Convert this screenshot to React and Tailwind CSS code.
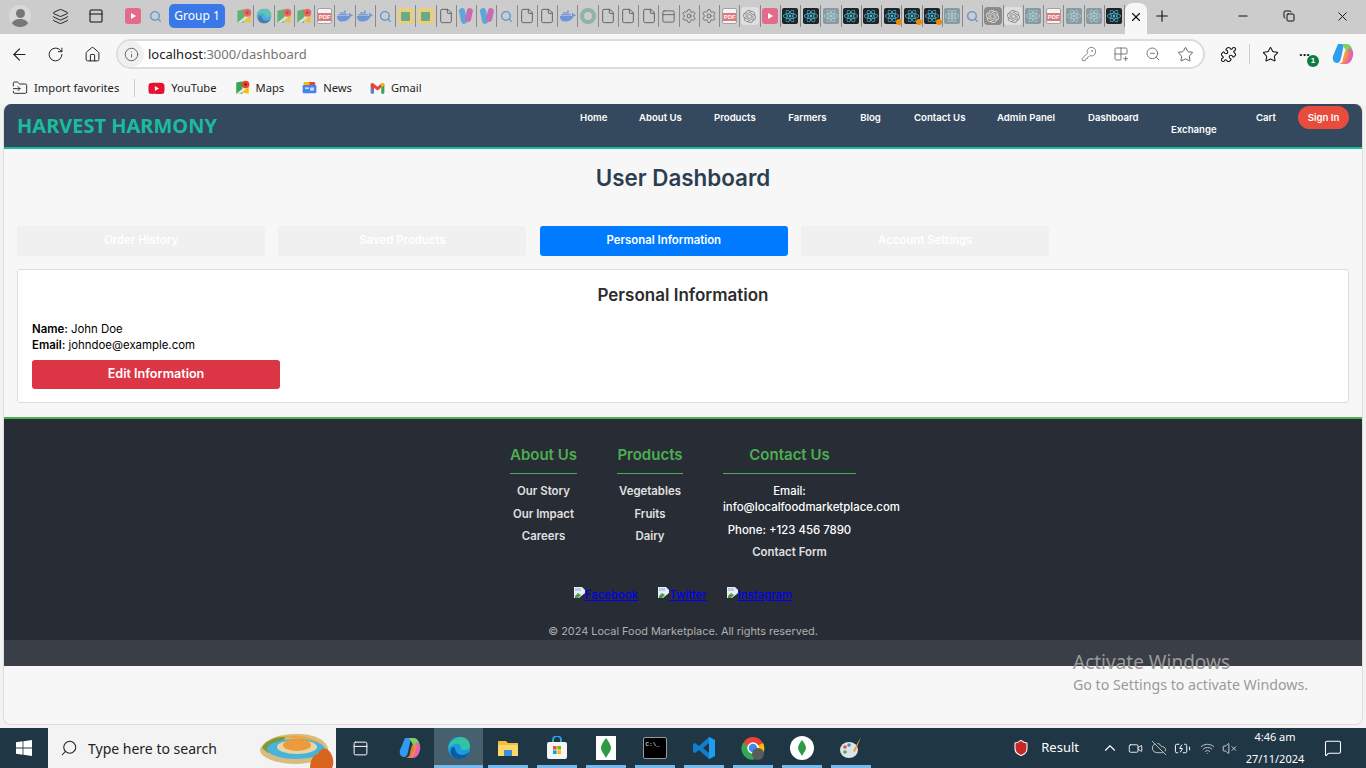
import React from "react";
import { ArrowLeft, RotateCw, House, Info, KeyRound, Grid2x2Plus, ZoomOut, Star, Puzzle, X, Plus, Minus, Copy, ChevronUp, VolumeX, Wifi, CloudOff, MessageSquare, Search, File, Settings, Layers, PanelTop, BatteryCharging, Video, Shield, FolderInput } from "lucide-react";
import { FaDocker, FaReact, FaYoutube } from "react-icons/fa";
import { SiOpenai } from "react-icons/si";

const poppins = "font-['Inter','Noto_Sans',sans-serif]";

const EdgeLogo = ({ size = 16 }) => (
    <svg width={size} height={size} viewBox="0 0 24 24">
        <circle cx="12" cy="12" r="11" fill="#1b9de2" />
        <path d="M1 13C2 5 9 1 14 1c5 0 9 4 9 9 0 3-3 4-6 4-2 0-3-1-3-2 0-3-3-5-6-4-4 1-6 3-7 5z" fill="#35c1a3" />
        <path d="M8 12c0 4 3 7 7 7 2 0 5-1 7-3-2 5-6 7-10 7-6 0-10-5-8-10 1-2 3-3 4-1z" fill="#0c59a4" />
    </svg>
);

const CopilotLogo = ({ size = 24 }) => (
    <svg width={size} height={size} viewBox="0 0 24 24">
        <path d="M7 2h6l-3 14c-.5 3-2 5-4 5-3 0-5-3-4-7z" fill="#2f9cf0" />
        <path d="M11 2h5c3 0 5 3 6 8l-5 3-3-6z" fill="#7fd15f" />
        <path d="M18 6c3 1 5 4 4 8-1 4-3 8-7 8H9c3 0 4-2 5-5z" fill="#e661b5" />
        <path d="M14 9h5l-2 8c-1 3-3 5-6 5H8c3-1 4-3 4-6z" fill="#f38b3c" opacity=".85" />
    </svg>
);

const GmailLogo = () => (
    <svg width="15" height="12" viewBox="0 0 24 18">
        <path d="M1 4v12c0 1 .6 2 2 2h3V8z" fill="#4285f4" />
        <path d="M23 4v12c0 1-.6 2-2 2h-3V8z" fill="#34a853" />
        <path d="M6 8v10h0L1 4c0-3 3-4 5-2l6 5 6-5c2-2 5-1 5 2l-5 4-6 5z" fill="#ea4335" />
        <path d="M18 8V2c2-2 5-1 5 2z" fill="#fbbc04" />
    </svg>
);

const MapsLogo = ({ size = 15 }) => (
    <svg width={size} height={size} viewBox="0 0 24 24">
        <path d="M2 4l10-2v20L2 22z" fill="#34a853" />
        <path d="M12 2l10 2v18l-10-2z" fill="#fbbc04" />
        <path d="M2 22L22 6v5L8 22z" fill="#e8eaed" />
        <circle cx="17" cy="7" r="6" fill="#ea4335" />
        <circle cx="17" cy="7" r="2" fill="#a50e0e" />
    </svg>
);

const NewsLogo = () => (
    <svg width="15" height="15" viewBox="0 0 24 24">
        <rect x="3" y="3" width="18" height="8" rx="2" fill="#ea4335" />
        <rect x="3" y="3" width="9" height="8" rx="2" fill="#fbbc04" />
        <rect x="1" y="8" width="22" height="13" rx="2" fill="#4285f4" />
        <rect x="5" y="12" width="6" height="2" fill="#fff" />
        <rect x="13" y="12" width="6" height="5" fill="#cfe0fc" />
    </svg>
);

const PdfIcon = () => (
    <span className="relative flex h-[16px] w-[15px] items-end justify-center rounded-[2px] border border-[#999] bg-white opacity-80">
        <span className="mb-[2px] w-[15px] bg-[#e2646c] text-center font-['Liberation_Sans',sans-serif] text-[6px] font-bold leading-[8px] text-white">PDF</span>
    </span>
);

const ReactIcon = ({ dim, dot }) => (
    <span className={`relative flex h-[16px] w-[16px] items-center justify-center rounded-[2px] ${dim ? "bg-[#8a9a9e]" : "bg-[#1f2428]"}`}>
        <FaReact size={14} color={dim ? "#a8d4de" : "#4fc3dc"} />
        {dot && <span className="absolute -bottom-[1px] -right-[2px] h-[6px] w-[6px] rounded-full bg-[#f08a00]" />}
    </span>
);

const faded = "opacity-70";

const tabIcons = {
    yt: <span className="flex h-[16px] w-[16px] items-center justify-center rounded-[3px] bg-[#e46b8c]"><span className="ml-[1px] h-0 w-0 border-y-[3px] border-l-[5px] border-y-transparent border-l-white" /></span>,
    search: <Search size={13} color="#5f96cc" strokeWidth={2.5} />,
    maps: <span className={faded}><MapsLogo size={16} /></span>,
    edge: <span className={faded}><EdgeLogo /></span>,
    pdf: <PdfIcon />,
    docker: <FaDocker size={16} color="#6f97d8" />,
    img: <span className="flex h-[16px] w-[16px] items-center justify-center rounded-[2px] bg-[#e5cf80]"><span className="h-[9px] w-[9px] rounded-[1px] bg-[#6fa886]" /></span>,
    file: <File size={16} color="#555" strokeWidth={1.3} />,
    slack: <span className="flex"><span className="h-[16px] w-[6px] -rotate-12 rounded-full bg-[#5fa6d6]" /><span className="h-[14px] w-[6px] rotate-12 rounded-full bg-[#c76bb5]" /></span>,
    ring: <span className="h-[16px] w-[16px] rounded-full border-[4px] border-[#8fb3aa]" />,
    tabs: <PanelTop size={15} color="#555" strokeWidth={1.3} />,
    gear: <Settings size={16} color="#666" strokeWidth={1.3} />,
    openai: <span className="flex h-[18px] w-[18px] items-center justify-center rounded-[4px] bg-[#dfdfdf]"><SiOpenai size={13} color="#888" /></span>,
    openaiDark: <span className="flex h-[18px] w-[18px] items-center justify-center rounded-[4px] bg-[#8b8b8b]"><SiOpenai size={13} color="#ddd" /></span>,
    react: <ReactIcon />,
    reactDim: <ReactIcon dim />,
    reactDot: <ReactIcon dot />,
};

const firstTabs = ["yt", "search"];
const restTabs = [
    "maps", "edge", "maps", "maps", "pdf", "docker", "docker", "search", "img", "img", "file", "slack", "slack", "search", "file", "file", "docker", "ring", "file", "file", "file", "tabs",
    "gear", "gear", "pdf", "openai", "yt", "react", "react", "reactDim", "react", "react", "reactDot", "reactDot", "reactDot", "reactDim", "search", "openaiDark", "openai", "reactDim", "pdf", "reactDim", "reactDim", "react",
];

const TabIcon = ({ kind }) => (
    <div className="flex h-[22px] w-[20.25px] shrink-0 items-center justify-center border-r border-[#8a8a8a]">
        {tabIcons[kind]}
    </div>
);

const TabStrip = () => (
    <div className="flex h-[34px] items-center bg-[#cccccc] pb-[2px]">
        <div className="flex w-[122px] shrink-0 items-center">
            <div className="ml-[9px] flex h-[22px] w-[22px] flex-col items-center justify-end overflow-hidden rounded-full bg-[#d8d8d8]">
                <span className="h-[9px] w-[9px] rounded-full bg-[#777]" />
                <span className="mt-[1px] h-[8px] w-[18px] rounded-t-full bg-[#777]" />
            </div>
            <Layers size={17} color="#222" strokeWidth={1.4} className="ml-[21px]" />
            <PanelTop size={16} color="#111" strokeWidth={1.6} className="ml-[19px]" />
        </div>
        {firstTabs.map((k, i) => <div key={i} className="flex w-[22px] shrink-0 justify-center">{tabIcons[k]}</div>)}
        <div className="ml-[3px] mr-[9px] flex h-[24px] w-[56px] shrink-0 items-center justify-center rounded-[5px] bg-[#3b78e7] font-['Noto_Sans',sans-serif] text-[12px] text-white">Group 1</div>
        {restTabs.map((k, i) => <TabIcon key={i} kind={k} />)}
        <div className="mt-[5px] flex h-[31px] w-[22px] shrink-0 items-center justify-center rounded-t-[8px] bg-[#f7f7f7] pb-[3px]">
            <X size={14} color="#111" />
        </div>
        <Plus size={18} color="#111" strokeWidth={1.5} className="ml-[6px]" />
        <div className="ml-auto flex items-center">
            <Minus size={14} color="#111" className="mr-[33px]" />
            <Copy size={12} color="#111" className="mr-[40px]" />
            <X size={15} color="#111" strokeWidth={1.5} className="mr-[16px]" />
        </div>
    </div>
);

const AddressBar = () => (
    <div className="flex h-[38px] items-center bg-[#f7f7f7] pt-[2px]">
        <ArrowLeft size={19} color="#222" strokeWidth={1.4} className="ml-[10px]" />
        <RotateCw size={17} color="#222" strokeWidth={1.4} className="ml-[18px]" />
        <House size={17} color="#222" strokeWidth={1.4} className="ml-[20px]" />
        <div className="ml-[15px] flex h-[30px] w-[1089px] items-center rounded-full border-2 border-[#dcdcdc] bg-white">
            <span className="flex h-[26px] w-[26px] items-center justify-center rounded-full bg-[#f0f0f0]">
                <Info size={15} color="#555" strokeWidth={1.4} />
            </span>
            <span className="ml-[4px] mt-[1px] font-['Noto_Sans',sans-serif] text-[13px] text-[#1a1a1a]">localhost<span className="text-[#757575]">:3000/dashboard</span></span>
            <div className="ml-auto mr-[9px] flex items-center gap-[16px]">
                <KeyRound size={16} color="#777" strokeWidth={1.3} />
                <Grid2x2Plus size={16} color="#666" strokeWidth={1.3} />
                <ZoomOut size={16} color="#666" strokeWidth={1.3} />
                <Star size={17} color="#555" strokeWidth={1.3} />
            </div>
        </div>
        <Puzzle size={17} color="#111" strokeWidth={1.5} className="ml-[15px]" />
        <span className="ml-[12px] h-[20px] w-px bg-[#ccc]" />
        <Star size={17} color="#111" strokeWidth={1.5} className="ml-[12px]" />
        <div className="relative ml-[20px] text-[13px] font-bold leading-none text-[#111]">
            ···
            <span className="absolute -bottom-[6px] -right-[9px] flex h-[12px] w-[12px] items-center justify-center rounded-full bg-[#107c41] font-['Liberation_Sans',sans-serif] text-[8px] text-white">1</span>
        </div>
        <span className="ml-[21px]"><CopilotLogo size={24} /></span>
    </div>
);

const Bookmark = ({ icon, label, className = "" }) => (
    <div className={`flex items-center gap-[6px] ${className}`}>
        {icon}
        <span>{label}</span>
    </div>
);

const BookmarksBar = () => (
    <div className="flex h-[32px] items-center bg-[#f7f7f7] pl-[12px] font-['Noto_Sans',sans-serif] text-[11.2px] text-[#222]">
        <Bookmark icon={<FolderInput size={16} color="#222" strokeWidth={1.4} />} label="Import favorites" />
        <span className="ml-[15px] h-[18px] w-px bg-[#ccc]" />
        <Bookmark icon={<FaYoutube size={17} color="#e8102e" />} label="YouTube" className="ml-[13px]" />
        <Bookmark icon={<MapsLogo />} label="Maps" className="ml-[18px]" />
        <Bookmark icon={<NewsLogo />} label="News" className="ml-[18px]" />
        <Bookmark icon={<GmailLogo />} label="Gmail" className="ml-[18px]" />
    </div>
);

const navItems = [
    { label: "Home", w: "w-[26px]" },
    { label: "About Us", w: "w-[42px]" },
    { label: "Products", w: "w-[41px]" },
    { label: "Farmers", w: "w-[39px]" },
    { label: "Blog", w: "w-[21px]" },
    { label: "Contact Us", w: "w-[50px]" },
    { label: "Admin Panel", w: "w-[58px]" },
    { label: "Dashboard", w: "w-[50px]" },
];

const Header = () => (
    <header className="flex h-[45px] items-start justify-between border-b-2 border-[#1abc9c] bg-[#34495e] px-[13px] shadow-[0_2px_4px_rgba(0,0,0,0.1)]">
        <div className="mt-[8px] font-['Noto_Sans',sans-serif] text-[20px] font-bold leading-[27px] text-[#1abc9c]">HARVEST HARMONY</div>
        <nav className={`flex items-start text-[9.6px] font-semibold leading-[14px] text-white ${poppins}`}>
            {navItems.map((item) => (
                <a key={item.label} className={`mr-[33px] mt-[7px] whitespace-nowrap text-center ${item.w}`}>{item.label}</a>
            ))}
            <a className="mr-[40px] mt-[19px] w-[45px] text-center">Exchange</a>
            <a className="mr-[23px] mt-[7px] w-[19px] text-center">Cart</a>
            <a className="mt-[2px] flex h-[23px] w-[51px] items-center justify-center rounded-[12px] bg-[#e74c3c]">Sign In</a>
        </nav>
    </header>
);

const tabs = [
    { label: "Order History" },
    { label: "Saved Products" },
    { label: "Personal Information", active: true },
    { label: "Account Settings" },
];

const Dashboard = () => (
    <main className={`bg-[#f7f7f7] px-[13px] pb-[14px] ${poppins}`}>
        <h1 className="h-[77px] pt-[13px] text-center text-[22.4px] font-semibold leading-[32px] text-[#2c3e50]">User Dashboard</h1>
        <div className="flex gap-[13.4px]">
            {tabs.map((t) => (
                <button key={t.label} className={`h-[30px] w-[248px] rounded-[3px] text-[11.4px] font-semibold text-white ${t.active ? "bg-[#007bff]" : "bg-[#f0f0f0]"}`}>
                    {t.label}
                </button>
            ))}
        </div>
        <section className="mt-[13px] h-[134px] rounded-[3px] border border-[#dddddd] bg-white px-[14px] pt-[13px]">
            <h2 className="text-center text-[17px] font-semibold leading-[24px] text-[#2c2c2c]">Personal Information</h2>
            <p className="mt-[14px] text-[11.4px] leading-[16px] text-black"><strong className="font-semibold">Name:</strong> John Doe</p>
            <p className="text-[11.4px] leading-[16px] text-black"><strong className="font-semibold">Email:</strong> johndoe@example.com</p>
            <button className="mt-[7px] h-[29px] w-[248px] rounded-[3px] bg-[#dc3545] text-[12.6px] font-semibold text-white">Edit Information</button>
        </section>
    </main>
);

const BrokenImage = () => (
    <svg width="11" height="11" viewBox="0 0 11 11" className="mb-[3px] shrink-0 self-start">
        <path d="M0 0h8l3 3v3L5 11H0z" fill="#e8eef5" />
        <path d="M1 9l3-3 3 2-3 3H1z" fill="#4f9a47" />
        <path d="M1 1h6v3H1z" fill="#b9cdea" />
    </svg>
);

const FooterColumn = ({ title, width, children }) => (
    <div className={`shrink-0 ${width}`}>
        <h3 className="border-b border-[#4caf50] pb-[8px] text-center text-[15px] font-semibold leading-[20px] text-[#4caf50]">{title}</h3>
        <div className="mt-[9px] flex flex-col text-center text-[11.4px] font-semibold leading-[16px] text-[#e0e0e0]">{children}</div>
    </div>
);

const socials = ["Facebook", "Twitter", "Instagram"];

const Footer = () => (
    <footer className={`border-t-2 border-[#4caf50] bg-[#282c34] ${poppins}`}>
        <div className="flex h-[221px] flex-col">
            <div className="mt-[26px] flex justify-center gap-[40px]">
                <FooterColumn title="About Us" width="w-[67px]">
                    <span className="mb-[7px]">Our Story</span>
                    <span className="mb-[6px]">Our Impact</span>
                    <span>Careers</span>
                </FooterColumn>
                <FooterColumn title="Products" width="w-[66px]">
                    <span className="mb-[7px]">Vegetables</span>
                    <span className="mb-[6px]">Fruits</span>
                    <span>Dairy</span>
                </FooterColumn>
                <FooterColumn title="Contact Us" width="w-[133px]">
                    <span className="font-medium text-white">Email:</span>
                    <span className="mb-[7px] whitespace-nowrap text-left font-medium text-white">info@localfoodmarketplace.com</span>
                    <span className="mb-[6px] font-medium text-white">Phone: +123 456 7890</span>
                    <span>Contact Form</span>
                </FooterColumn>
            </div>
            <div className="mt-[27px] flex justify-center gap-[20px] text-[11.4px] font-medium leading-[16px] text-[#0000ee]">
                {socials.map((s) => (
                    <a key={s} className="flex items-center underline"><BrokenImage />{s}</a>
                ))}
            </div>
            <p className="mt-auto pb-[1px] text-center text-[10.9px] leading-[16px] text-[#b0b0b0]">© 2024 Local Food Marketplace. All rights reserved.</p>
        </div>
        <div className="h-[26px] bg-[#3a3f47]" />
    </footer>
);

const TaskIcon = ({ children, active, open }) => (
    <div className={`flex h-[40px] w-[49px] shrink-0 justify-center ${active ? "bg-[#47606e]" : ""}`}>
        <div className={`flex h-[40px] items-center justify-center border-b-[3px] pt-[3px] ${active ? "w-[49px]" : "w-[40px]"} ${open ? "border-[#76b9ed]" : "border-transparent"}`}>
            {children}
        </div>
    </div>
);

const Taskbar = () => (
    <div className="flex h-[40px] items-center bg-[#1f3644] text-white">
        <div className="flex h-[40px] w-[48px] items-center justify-center">
            <svg width="16" height="16" viewBox="0 0 16 16" fill="#fff"><path d="M0 2.2l6.6-.9v6.3H0zM7.4 1.2L16 0v7.6H7.4zM0 8.4h6.6v6.3L0 13.8zM7.4 8.4H16V16l-8.6-1.2z" /></svg>
        </div>
        <div className="flex h-[40px] w-[288px] items-center overflow-hidden bg-[#f3f3f3] pl-[12px] font-['Noto_Sans',sans-serif] text-[14px] text-[#222]">
            <Search size={18} color="#222" strokeWidth={1.4} className="-scale-x-100" />
            <span className="ml-[10px]">Type here to search</span>
            <svg width="78" height="40" viewBox="0 0 78 40" className="ml-auto">
                <path d="M2 22C4 12 22 5 40 6c16 0 28 6 30 14 1 8-14 16-32 16C20 36 2 30 2 22z" fill="#d9bd80" />
                <path d="M4 20C8 11 22 8 28 9l-6 8-12 8z" fill="#7c9a3c" />
                <path d="M24 9c12-3 26-1 38 5l-10 2c-8-5-18-6-28-7z" fill="#f0a63f" />
                <ellipse cx="38" cy="21" rx="29" ry="10" fill="#48b4da" />
                <ellipse cx="39" cy="19" rx="20" ry="7" fill="#e8d6a4" />
                <ellipse cx="39" cy="17" rx="14" ry="6" fill="#ec9a3c" />
                <path d="M52 40c0-8 4-14 8-14 2-6 8-8 12-2 4 6 4 12 2 16z" fill="#d9641e" />
            </svg>
        </div>
        <TaskIcon><PanelTop size={17} color="#fff" strokeWidth={1.4} /></TaskIcon>
        <TaskIcon><CopilotLogo size={24} /></TaskIcon>
        <TaskIcon active open><EdgeLogo size={24} /></TaskIcon>
        <TaskIcon open><svg width="22" height="20" viewBox="0 0 22 20"><path d="M1 3h8l2 2h10v13H1z" fill="#f2bd3c" /><path d="M1 7h20v11H1z" fill="#ffd767" /><rect x="7" y="12" width="8" height="6" fill="#3b8fd6" /></svg></TaskIcon>
        <TaskIcon open><svg width="22" height="24" viewBox="0 0 22 24"><path d="M7 6V4a4 4 0 018 0v2" fill="none" stroke="#2aa5e0" strokeWidth="2" /><rect x="1" y="6" width="20" height="17" rx="2" fill="#f4f4f4" /><rect x="7" y="10" width="3.6" height="3.6" fill="#f25022" /><rect x="11.4" y="10" width="3.6" height="3.6" fill="#7fba00" /><rect x="7" y="14.4" width="3.6" height="3.6" fill="#00a4ef" /><rect x="11.4" y="14.4" width="3.6" height="3.6" fill="#ffb900" /></svg></TaskIcon>
        <TaskIcon open><span className="flex h-[24px] w-[20px] items-center justify-center bg-white"><svg width="10" height="20" viewBox="0 0 10 20"><path d="M5 0c3 4 5 7 5 10s-3 6-5 10C3 16 0 13 0 10S2 4 5 0z" fill="#2e9a45" /></svg></span></TaskIcon>
        <TaskIcon open><span className="flex h-[22px] w-[24px] items-start rounded-[2px] border border-[#999] bg-black pl-[2px] pt-[4px] font-['Liberation_Mono',monospace] text-[6px] leading-none text-white">C:\_</span></TaskIcon>
        <TaskIcon open><svg width="24" height="24" viewBox="0 0 24 24"><path d="M17 1l6 3v16l-6 3L7 14l-4 3-2-1V8l2-1 4 3z" fill="#0f7fcc" /><path d="M17 1l6 3v16l-6 3z" fill="#1f9cf0" /><path d="M17 7v10l-6-5z" fill="#1f3644" /></svg></TaskIcon>
        <TaskIcon open><svg width="24" height="24" viewBox="0 0 24 24"><circle cx="12" cy="12" r="11" fill="#ea4335" /><path d="M12 12L22 7a11 11 0 01-7 16z" fill="#fbbc04" /><path d="M12 12L15 23A11 11 0 012 7z" fill="#34a853" /><circle cx="12" cy="12" r="5" fill="#4285f4" stroke="#fff" strokeWidth="1.5" /><circle cx="17" cy="18" r="6" fill="#5a5a5a" /></svg></TaskIcon>
        <TaskIcon open><span className="flex h-[24px] w-[24px] items-center justify-center rounded-full bg-white"><svg width="8" height="18" viewBox="0 0 10 20"><path d="M5 0c3 4 5 7 5 10s-3 6-5 10C3 16 0 13 0 10S2 4 5 0z" fill="#2e9a45" /></svg></span></TaskIcon>
        <TaskIcon open><svg width="24" height="24" viewBox="0 0 24 24"><ellipse cx="10" cy="14" rx="9" ry="8" fill="#dfe4e8" /><circle cx="6" cy="11" r="1.8" fill="#e74c3c" /><circle cx="10" cy="9" r="1.8" fill="#3b8fd6" /><circle cx="6" cy="16" r="1.8" fill="#4caf50" /><path d="M22 1l-8 14 2 1z" fill="#e8a33d" /></svg></TaskIcon>
        <div className="ml-auto flex items-center">
            <Shield size={18} color="#fff" fill="#c62828" strokeWidth={1.4} />
            <span className="ml-[11px] font-['Noto_Sans',sans-serif] text-[13px]">Result</span>
            <ChevronUp size={18} color="#fff" strokeWidth={1.5} className="ml-[22px]" />
            <Video size={15} color="#fff" strokeWidth={1.4} className="ml-[9px]" />
            <CloudOff size={16} color="#bbb" strokeWidth={1.5} className="ml-[8px]" />
            <BatteryCharging size={17} color="#fff" strokeWidth={1.4} className="ml-[7px]" />
            <Wifi size={15} color="#ccc" strokeWidth={1.4} className="ml-[9px]" />
            <VolumeX size={15} color="#ddd" strokeWidth={1.4} className="ml-[7px]" />
            <div className="ml-[7px] w-[62px] text-center font-['Noto_Sans',sans-serif] text-[11px] leading-[22px]">
                <div>4:46 am</div>
                <div>27/11/2024</div>
            </div>
            <MessageSquare size={18} color="#fff" strokeWidth={1.4} className="ml-[18px] mr-[24px]" />
        </div>
    </div>
);

const App = () => {
    return (
        <div className="flex h-[768px] w-[1366px] flex-col overflow-hidden bg-[#f0f0f0]">
            <TabStrip />
            <AddressBar />
            <BookmarksBar />
            <div className="relative h-[624px] bg-[#f3f3f3] px-[3px]">
                <div className="h-[621px] overflow-hidden rounded-[8px] border border-t-0 border-[#dddddd] bg-[#f7f7f7]">
                    <Header />
                    <Dashboard />
                    <Footer />
                </div>
                {/* watermark sits over the page */}
                <div className="absolute left-[1073px] top-[544px] font-['Noto_Sans',sans-serif] text-[#9a9a9a]">
                    <div className="text-[19px] leading-[28px]">Activate Windows</div>
                    <div className="text-[14.2px] leading-[18px]">Go to Settings to activate Windows.</div>
                </div>
            </div>
            <Taskbar />
        </div>
    );
};

export default App;
